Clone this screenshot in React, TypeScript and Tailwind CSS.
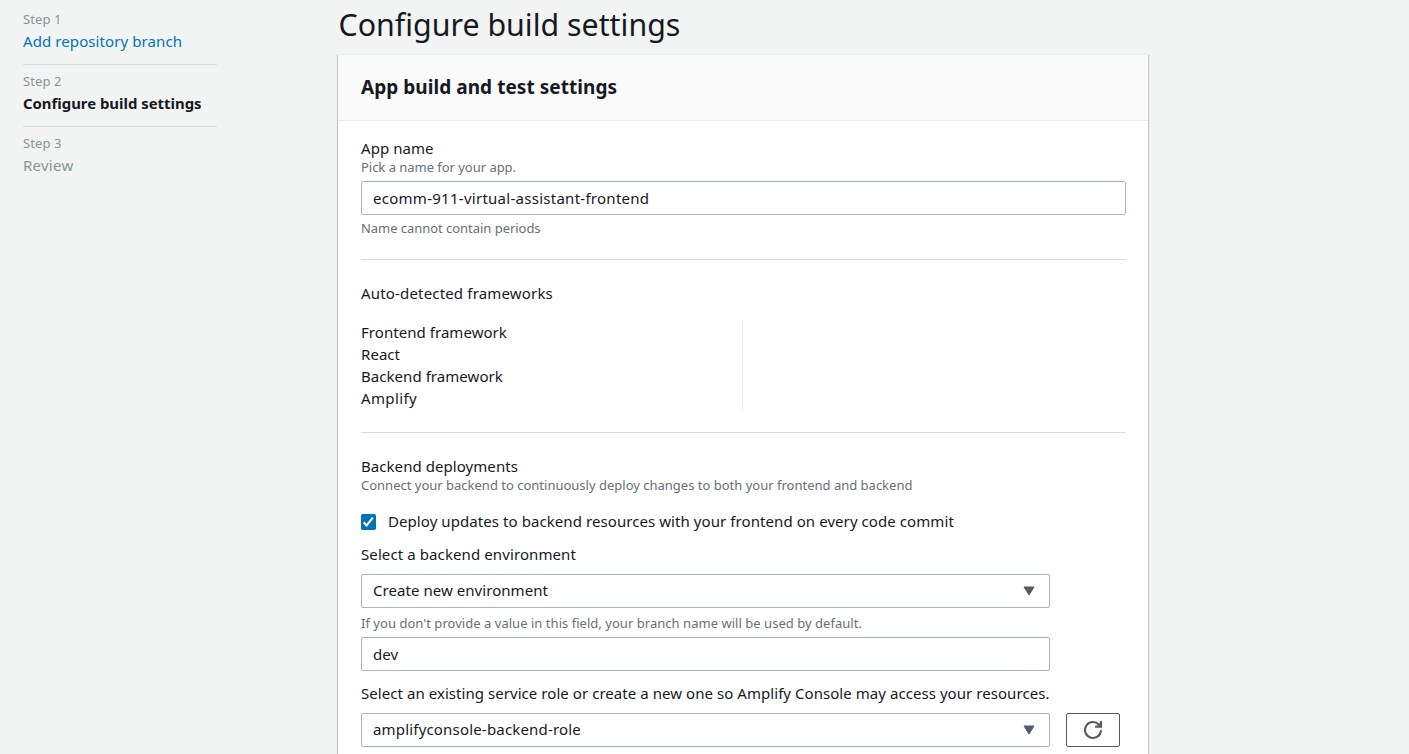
import type { ReactNode } from "react";

function Step({ n, children, first, last }: { n: number; children: ReactNode; first?: boolean; last?: boolean }) {
  return (
    <li className={`flex flex-col pt-1.5 pb-3 ${first ? "mt-[3px]" : ""} ${last ? "" : "border-b border-[#d5dbdb]"}`}>
      <span className="mb-px text-[13px] leading-5 tracking-[0.1px] text-[#879596]">Step {n}</span>
      {children}
    </li>
  );
}

function Caret() {
  return (
    <svg className="h-[10px] w-3" viewBox="0 0 12 10" fill="#545b64" stroke="#545b64" strokeLinejoin="round">
      <path d="M1 1h10L6 9z" />
    </svg>
  );
}

function SelectBox({ children }: { children: ReactNode }) {
  return (
    <div className="flex h-[34px] w-[689px] items-center justify-between rounded-xs border border-[#aab7b8] bg-white pr-[14px] pl-[11px]">
      <div className="pb-0.5">{children}</div>
      <Caret />
    </div>
  );
}

export default function App() {
  return (
    <div className="flex h-[754px] w-[1409px] overflow-hidden bg-[#f2f3f3] pl-[23px] font-['Noto_Sans',sans-serif] text-[15px] leading-[22px] whitespace-nowrap text-[#16191f]">
      <ol className="w-[194px] shrink-0">
        <Step n={1} first>
          <a className="tracking-[0.09px] text-[#0073bb]">Add repository branch</a>
        </Step>
        <Step n={2}>
          <span className="text-[14.9px] font-bold">Configure build settings</span>
        </Step>
        <Step n={3} last>
          <span className="tracking-[0.25px] text-[#879596]">Review</span>
        </Step>
      </ol>

      <main className="ml-[121px] w-[810px] shrink-0">
        <h1 className="h-[54px] pt-[5px] pl-[0.5px] text-[30.35px] leading-10">Configure build settings</h1>

        <section className="h-[760px] border-t border-[#eaeded] bg-white shadow-[0_1px_1px_0_rgba(0,28,36,0.3),1px_1px_1px_0_rgba(0,28,36,0.15),-1px_1px_1px_0_rgba(0,28,36,0.15)]">
          <header className="flex h-[66px] items-center border-b border-[#eaeded] bg-[#fafafa] px-[23px] pb-0.5">
            <h2 className="text-[19px] font-bold tracking-[0.05px]">App build and test settings</h2>
          </header>

          <div className="px-[23px] pt-4">
            <div className="tracking-[0.05px]">App name</div>
            <div className="-mt-0.5 text-[13px] leading-5 tracking-[-0.03px] text-[#687078]">Pick a name for your app.</div>
            <div className="mt-1 flex h-[34px] w-[765px] items-center rounded-xs border border-[#aab7b8] pl-[11px]">
              <span className="tracking-[0.27px]">ecomm-911-virtual-assistant-frontend</span>
            </div>
            <div className="mt-1 text-[13px] leading-[18px] tracking-[-0.04px] text-[#687078]">Name cannot contain periods</div>

            <div className="mt-[22px] w-[765px] border-t border-[#d5dbdb] pt-[22px]">
              <div className="tracking-[0.17px]">Auto-detected frameworks</div>
              <div className="mt-[18px] flex h-[88px] w-[382px] flex-col border-r border-[#eaeded] tracking-[0.05px]">
                <div className="-mt-px">Frontend framework</div>
                <div>React</div>
                <div>Backend framework</div>
                <div className="tracking-[0.37px]">Amplify</div>
              </div>
            </div>

            <div className="mt-[22px] w-[765px] border-t border-[#d5dbdb] pt-[22px]">
              <div className="tracking-[0.06px]">Backend deployments</div>
              <div className="-mt-0.5 text-[13px] leading-5 text-[#687078]">
                Connect your backend to continuously deploy changes to both your frontend and backend
              </div>
              <label className="mt-[15px] flex items-center">
                <svg className="mt-px mr-[11px] h-4 w-4" viewBox="0 0 16 16">
                  <rect x="0" y="0" width="15" height="16" rx="1.8" fill="#0073bb" />
                  <path d="M2.6 8.3l3 3.1 6.2-7.8" fill="none" stroke="#fff" strokeWidth="2.1" />
                </svg>
                <span className="tracking-[0.075px]">
                  Deploy updates to backend resources with your frontend on every code commit
                </span>
              </label>
              <div className="mt-[11px] mb-[9px] tracking-[0.1px]">Select a backend environment</div>
              <SelectBox>
                <span className="tracking-[0.055px]">Create new environment</span>
              </SelectBox>
              <div className="mt-[6px] text-[13px] leading-[18px] tracking-[0.034px] text-[#687078]">
                If you don't provide a value in this field, your branch name will be used by default.
              </div>
              <div className="mt-[5px] flex h-[34px] w-[689px] items-center rounded-xs border border-[#aab7b8] pl-[11px]">
                dev
              </div>
              <div className="mt-[11px] mb-[9px] tracking-[0.055px]">
                Select an existing service role or create a new one so Amplify Console may access your resources.
              </div>
              <div className="flex gap-4">
                <SelectBox>
                  <span className="tracking-[0.18px]">amplifyconsole-backend-role</span>
                </SelectBox>
                <button className="flex h-[34px] w-[54px] items-center justify-center rounded-xs border border-[#545b64]">
                  <svg className="h-5 w-5" viewBox="0 0 20 20" fill="none" stroke="#545b64" strokeWidth="2.1">
                    <path d="M18 10.2a8 8 0 1 1-2.3-5.8L17.6 6.2" />
                    <path d="M18 1v5.6h-5.8" />
                    <path d="M14.6 4.2L17 3v3z" fill="#545b64" stroke="none" />
                  </svg>
                </button>
              </div>
            </div>
          </div>
        </section>
      </main>
    </div>
  );
}
